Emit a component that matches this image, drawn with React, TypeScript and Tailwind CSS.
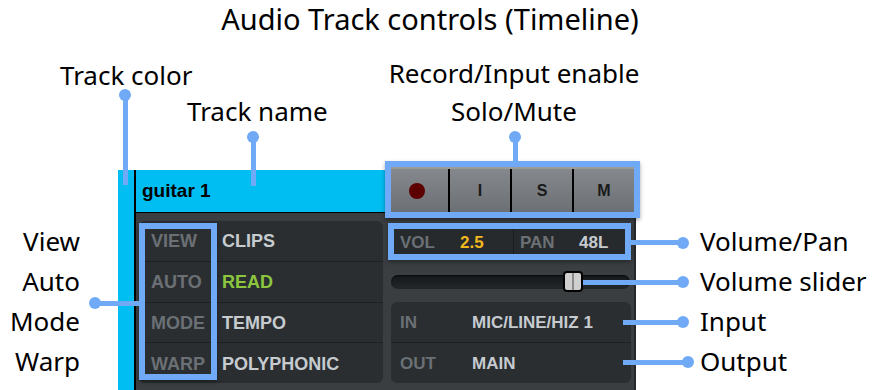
import React from "react";

const note = "font-['Noto_Sans',sans-serif] text-[26px] leading-[30px] text-black whitespace-nowrap";
const ui = "font-['Liberation_Sans',Arial,sans-serif] font-bold";

function Dot({ x, y }: { x: number; y: number }) {
  return (
    <div
      className="absolute h-[12px] w-[12px] rounded-full bg-[#70aaf6]"
      style={{ left: x - 6, top: y - 6 }}
    />
  );
}

function Bar({ x, y, w, h }: { x: number; y: number; w: number; h: number }) {
  return <div className="absolute bg-[#70aaf6]" style={{ left: x, top: y, width: w, height: h }} />;
}

function Box({ x, y, w, h }: { x: number; y: number; w: number; h: number }) {
  return (
    <div
      className="absolute border-[6px] border-[#70aaf6] shadow-[0_2px_4px_rgba(0,0,0,0.35)]"
      style={{ left: x, top: y, width: w, height: h }}
    />
  );
}

const leftRows = [
  { label: "VIEW", value: "CLIPS", color: "text-[#c6cbd0]" },
  { label: "AUTO", value: "READ", color: "text-[#8cc63f]" },
  { label: "MODE", value: "TEMPO", color: "text-[#c6cbd0]" },
  { label: "WARP", value: "POLYPHONIC", color: "text-[#c6cbd0]" },
];

function TrackPanel() {
  return (
    <div className="absolute left-[118px] top-[170px] flex h-[220px] w-[518px]">
      <div className="w-[16px] bg-[#00bdf2]" />
      <div className="w-[2px] bg-black" />
      <div className="flex flex-1 flex-col">
        {/* header */}
        <div className="flex h-[43px] items-stretch border-b border-black bg-[#00bdf2]">
          <div className={`${ui} flex flex-1 items-center pl-[6px] text-[19px] text-black`}>guitar 1</div>
          <div className="-mt-[3px] mr-[2px] flex w-[248px] border-t-2 border-[#9d9b98] bg-gradient-to-b from-[#85888c] to-[#6c6f73]">
            <div className="flex w-[62px] items-center justify-center">
              <div className="h-[16px] w-[16px] rounded-full bg-[#5c0000]" />
            </div>
            {["I", "S", "M"].map((l) => (
              <div
                key={l}
                className={`${ui} flex w-[62px] items-center justify-center border-l-2 border-black text-[16px] text-[#1a1a1a]`}
              >
                {l}
              </div>
            ))}
          </div>
        </div>
        {/* body */}
        <div className="flex flex-1 gap-[8px] border-r-2 border-[#26292b] bg-[#3a3e41] pl-[3px] pt-[8px]">
          <div className="flex h-[162px] w-[244px] flex-col divide-y divide-[#1e2123] overflow-hidden rounded-[6px] bg-[#2a2e31]">
            {leftRows.map((r) => (
              <div key={r.label} className={`${ui} flex flex-1 items-center pl-[12px] pt-[2px] text-[18px]`}>
                <span className="w-[71px] text-[#6b7075]">{r.label}</span>
                <span className={r.color}>{r.value}</span>
              </div>
            ))}
          </div>
          <div className="flex w-[240px] flex-col">
            <div className={`${ui} mt-[5px] flex h-[32px] items-center bg-[#262a2d] pt-[2px] text-[17px]`}>
              <div className="flex h-full w-[122px] items-center pl-[9px]">
                <span className="w-[60px] text-[#6b7075]">VOL</span>
                <span className="text-[#f4b81f]">2.5</span>
              </div>
              <div className="flex h-full flex-1 items-center border-l border-[#1a1d1f] pl-[6px]">
                <span className="w-[59px] text-[#6b7075]">PAN</span>
                <span className="text-[#c6cbd0]">48L</span>
              </div>
            </div>
            <div className="flex h-[44px] items-center pt-[4px]">
              <div className="relative h-[14px] w-[239px] rounded-full bg-gradient-to-b from-[#151719] to-[#24282a] shadow-[inset_0_1px_2px_rgba(0,0,0,0.6)]">
                <div className="absolute left-[172px] top-[-4px] flex h-[21px] w-[20px] justify-center rounded-[4px] border-2 border-black bg-[#cfcfcf]">
                  <div className="h-full w-[2px] bg-[#8a8a8a]" />
                </div>
              </div>
            </div>
            <div className={`${ui} flex h-[81px] flex-col divide-y divide-[#1e2123] overflow-hidden rounded-[6px] bg-[#2a2e31] text-[17px]`}>
              <div className="flex flex-1 items-center pl-[9px] pt-[2px]">
                <span className="w-[72px] text-[#6b7075]">IN</span>
                <span className="text-[#c6cbd0]">MIC/LINE/HIZ 1</span>
              </div>
              <div className="flex flex-1 items-center pl-[9px] pt-[2px]">
                <span className="w-[72px] text-[#6b7075]">OUT</span>
                <span className="text-[#c6cbd0]">MAIN</span>
              </div>
            </div>
          </div>
        </div>
      </div>
    </div>
  );
}

export default function App() {
  return (
    <div className="relative h-[390px] w-[876px] overflow-hidden bg-white">
      <div className="absolute left-0 top-[2px] w-[860px] whitespace-nowrap text-center font-['Noto_Sans',sans-serif] text-[29px] leading-[34px] text-black">
        Audio Track controls (Timeline)
      </div>
      <div className={`${note} absolute left-[60px] top-[60px]`}>Track color</div>
      <div className={`${note} absolute left-[187px] top-[96px]`}>Track name</div>
      <div className={`${note} absolute left-[364px] top-[58px] w-[300px] text-center`}>
        <div>Record/Input enable</div>
        <div className="mt-[8px]">Solo/Mute</div>
      </div>

      <TrackPanel />

      {/* left callouts */}
      <div className={`${note} absolute left-0 top-[221px] flex w-[80px] flex-col items-end`}>
        {["View", "Auto", "Mode", "Warp"].map((t) => (
          <div key={t} className="leading-[40px]">{t}</div>
        ))}
      </div>
      {/* right callouts */}
      <div className={`${note} absolute left-[700px] top-[221px] flex flex-col`}>
        {["Volume/Pan", "Volume slider", "Input", "Output"].map((t) => (
          <div key={t} className="leading-[40px]">{t}</div>
        ))}
      </div>

      <Box x={385} y={161} w={255} h={57} />
      <Box x={388} y={223} w={243} h={37} />
      <Box x={139} y={223} w={78} h={157} />

      <Bar x={123} y={95} w={5} h={90} />
      <Dot x={125} y={95} />
      <Bar x={251} y={137} w={5} h={49} />
      <Dot x={253} y={137} />
      <Bar x={513} y={137} w={5} h={24} />
      <Dot x={515} y={137} />
      <Bar x={95} y={301} w={44} h={5} />
      <Dot x={95} y={303} />
      <Bar x={631} y={240} w={52} h={5} />
      <Dot x={683} y={243} />
      <Bar x={583} y={280} w={100} h={5} />
      <Dot x={683} y={282} />
      <Bar x={623} y={320} w={60} h={5} />
      <Dot x={683} y={322} />
      <Bar x={623} y={360} w={65} h={5} />
      <Dot x={688} y={362} />
    </div>
  );
}
